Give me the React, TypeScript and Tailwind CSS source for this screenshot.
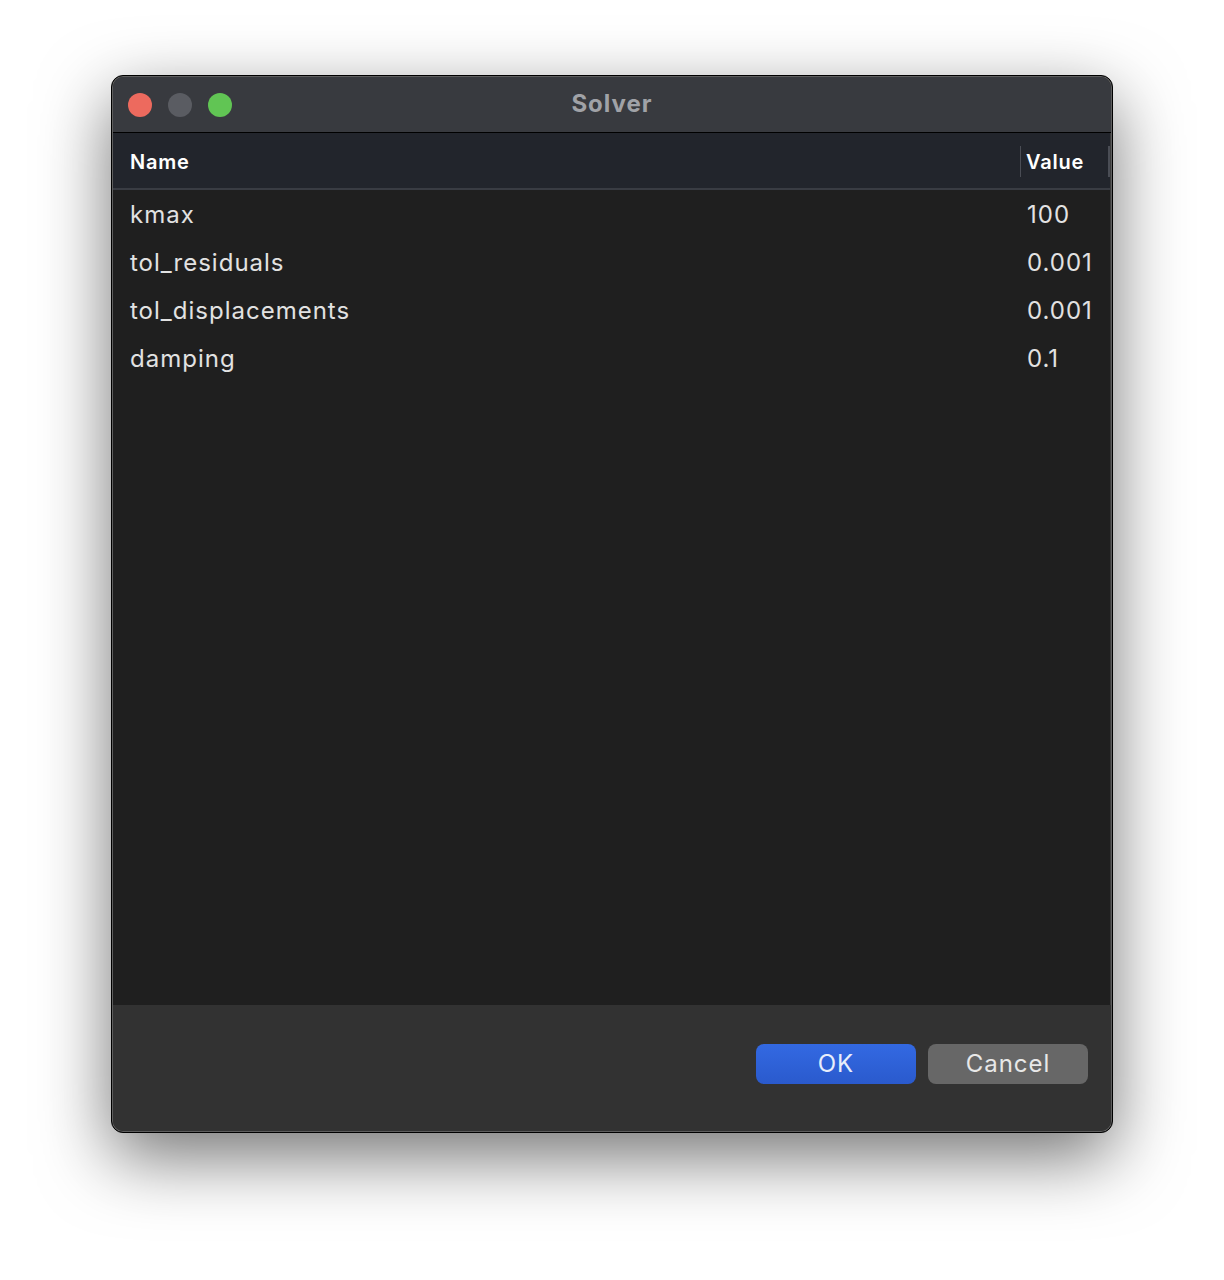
import React from 'react';

const rows = [
    { name: 'kmax', value: '100' },
    { name: 'tol_residuals', value: '0.001' },
    { name: 'tol_displacements', value: '0.001' },
    { name: 'damping', value: '0.1' },
];

const App: React.FC = () => {
    return (
        <div
            className="w-[1224px] h-[1280px] bg-white pt-[75px] pl-[111px]"
            style={{ fontFamily: 'Inter, "Liberation Sans", sans-serif' }}
        >
            <div className="w-[1002px] h-[1058px] rounded-[12px] border border-black bg-[#323232] overflow-hidden flex flex-col shadow-[0_24px_70px_rgba(0,0,0,0.55),inset_0_0_0_1px_#5e5e5e]">
                {/* title bar */}
                <div className="relative h-[56px] bg-[#383a3f] border-b border-black flex items-center shrink-0 mx-px mt-px rounded-t-[11px]">
                    <div className="flex items-center gap-[16px] pl-[15px]">
                        <span className="w-[24px] h-[24px] rounded-full bg-[#ed6a5e]" />
                        <span className="w-[24px] h-[24px] rounded-full bg-[#5a5c62]" />
                        <span className="w-[24px] h-[24px] rounded-full bg-[#61c554]" />
                    </div>
                    <div className="absolute inset-0 flex items-center justify-center pb-[2px] text-[24px] font-bold tracking-[1px] text-[#a0a2a7]">
                        Solver
                    </div>
                </div>

                {/* table */}
                <div className="flex-1 flex flex-col bg-[#1f1f1f] mx-px border-r border-[#3c3c3c]">
                    <div className="h-[57px] bg-[#22252c] border-b-2 border-[#393c43] flex items-center pt-[2px] text-[20px] font-semibold tracking-[0.8px] text-white shrink-0">
                        <div className="flex-1 pl-[17px]">Name</div>
                        <div className="w-[88px] h-[31px] flex items-center border-l border-[#4a4d55] pl-[5px]">Value</div>
                        <div className="w-[2px] h-[31px] bg-[#4a4d55]" />
                    </div>
                    <div className="flex flex-col pt-[1px] text-[24px] tracking-[1px] text-[#e2e2e2]">
                        {rows.map((row) => (
                            <div key={row.name} className="h-[48px] flex items-center">
                                <div className="flex-1 pl-[17px]">{row.name}</div>
                                <div className="w-[89px] pl-[6px]">{row.value}</div>
                            </div>
                        ))}
                    </div>
                </div>

                {/* footer */}
                <div className="h-[126px] bg-[#323232] shrink-0 flex items-start justify-end gap-[12px] pt-[39px] pr-[23px] mx-px mb-px rounded-b-[11px]">
                    <button className="w-[160px] h-[40px] rounded-[8px] bg-gradient-to-b from-[#3369e2] to-[#2a5acd] text-[24px] tracking-[1px] text-[#e8eefb] flex items-center justify-center">
                        OK
                    </button>
                    <button className="w-[160px] h-[40px] rounded-[8px] bg-[#676767] text-[24px] tracking-[1px] text-[#e8e8e8] flex items-center justify-center">
                        Cancel
                    </button>
                </div>
            </div>
        </div>
    );
};

export default App;
